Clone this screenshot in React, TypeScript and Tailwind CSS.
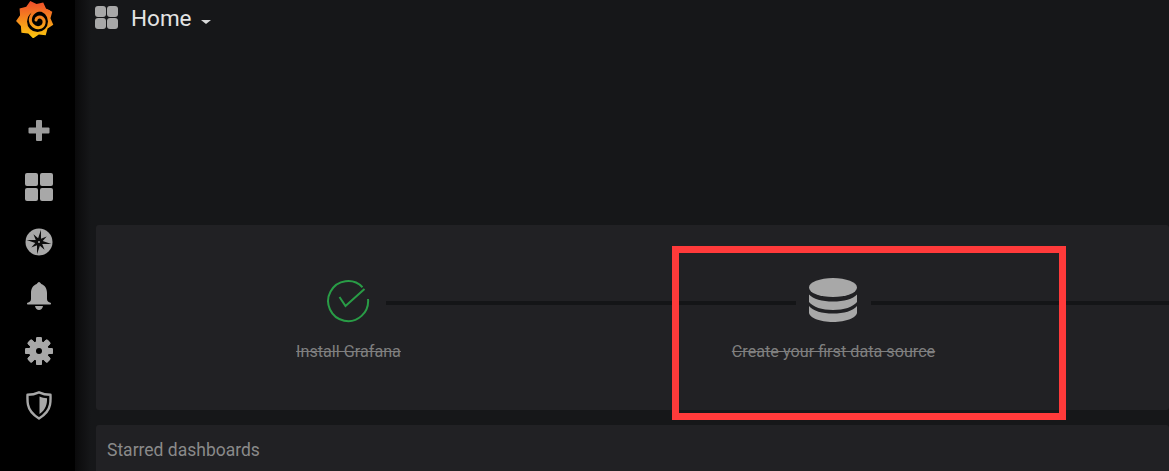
import React from "react";

const Grid = ({ size, gap, r }: { size: number; gap: number; r: number }) => {
  const c = (size - gap) / 2;
  return (
    <svg width={size} height={size} viewBox={`0 0 ${size} ${size}`} fill="#a8a8a8">
      <rect x={0} y={0} width={c} height={c} rx={r} />
      <rect x={c + gap} y={0} width={c} height={c} rx={r} />
      <rect x={0} y={c + gap} width={c} height={c} rx={r} />
      <rect x={c + gap} y={c + gap} width={c} height={c} rx={r} />
    </svg>
  );
};

const starPoints = (cx: number, cy: number, rays: number, radius: (k: number) => number, start: number) => {
  const pts: string[] = [];
  for (let k = 0; k < rays * 2; k++) {
    const a = start + (k * Math.PI) / rays;
    const r = radius(k);
    pts.push(`${(cx + r * Math.sin(a)).toFixed(2)},${(cy - r * Math.cos(a)).toFixed(2)}`);
  }
  return pts.join(" ");
};

const Logo = () => (
  <svg width="38" height="38" viewBox="0 0 38 38">
    <defs>
      <linearGradient id="lg" gradientUnits="userSpaceOnUse" x1="0" y1="2" x2="0" y2="38">
        <stop offset="0" stopColor="#ef4f2b" />
        <stop offset="1" stopColor="#fcc80e" />
      </linearGradient>
    </defs>
    <polygon
      fill="url(#lg)"
      points={starPoints(19, 19.500, 9, (k) => (k % 2 === 0 ? 19 : 15.500), -0.25)}
    />
    <circle cx="21.500" cy="21.500" r="10.500" fill="#000" />
    <path
      fill="none"
      stroke="url(#lg)"
      strokeWidth="3"
      strokeLinecap="round"
      d="M33 11.500C27 8 18 9.500 15 16.500c-2.500 6.500 3 12 8.500 11 5-1 6-7 2.800-9.500-2.500-2-6-.7-6.300 2"
    />
  </svg>
);

const Compass = () => (
  <svg width="28" height="28" viewBox="0 0 28 28">
    <circle cx="14" cy="14" r="13.500" fill="#a8a8a8" />
    <polygon
      fill="#0b0b0b"
      points={starPoints(14, 14, 8, (k) => (k % 2 === 1 ? 3.800 : k % 4 === 0 ? 12.500 : 9.500), 0.16)}
    />
    <circle cx="14" cy="14" r="1" fill="#a8a8a8" />
  </svg>
);

const Bell = () => (
  <svg width="24" height="29" viewBox="0 0 24 29" fill="#a8a8a8">
    <path d="M12 0c1 0 1.500 1 2.300 2C17.500 3 20 6 20 11v6c0 2 1.500 3.500 3.500 3.800.7.100.7 1.700-.2 1.700H.700c-.9 0-.9-1.600-.2-1.700C2.500 20.500 4 19 4 17v-6c0-5 2.500-8 5.700-9C10.500 1 11 0 12 0z" />
    <path d="M8 24h8c-.5 2.500-2 4-4 4s-3.500-1.500-4-4z" />
  </svg>
);

const Gear = () => (
  <svg width="28" height="28" viewBox="0 0 28 28">
    <g fill="#a8a8a8">
      {[0, 45, 90, 135, 180, 225, 270, 315].map((a) => (
        <rect key={a} x="11" y="0" width="6" height="28" rx="1.500" transform={`rotate(${a} 14 14)`} />
      ))}
      <circle cx="14" cy="14" r="10" />
    </g>
    <circle cx="14" cy="14" r="3" fill="#000" />
  </svg>
);

const Shield = () => (
  <svg width="26" height="29" viewBox="0 0 26 29">
    <path
      fill="none"
      stroke="#a8a8a8"
      strokeWidth="2.400"
      strokeLinejoin="round"
      d="M13 1.300c3.500 1.600 7 2.400 11.500 2.400 0 3 .3 6.500-.5 10-1 5.500-5 10-11 13.800C7 23.700 3 19.200 2 13.700c-.8-3.500-.5-7-.5-10C6 3.700 9.500 2.900 13 1.300z"
    />
    <path fill="#a8a8a8" d="M13.500 5.500c2.500 1 4.800 1.700 7.500 1.800.2 5.700-1 11.200-7.500 15.700z" />
  </svg>
);

const Database = () => (
  <svg width="48" height="44" viewBox="0 0 48 44" fill="#a8a8a8" className="mb-[2px] mr-[2px]">
    <ellipse cx="24" cy="9.500" rx="24" ry="9.500" />
    <path d="M0 16.500C4 21 13 23.500 24 23.500S44 21 48 16.500V24C44 29 35 32 24 32S4 29 0 24z" />
    <path d="M0 28C4 33 13 35.500 24 35.500S44 33 48 28V34.500C48 39.500 37 44 24 44S0 39.500 0 34.500z" />
  </svg>
);

const Check = () => (
  <svg width="44" height="44" viewBox="0 0 44 44" fill="none" stroke="#299c46" className="mr-[1px]">
    <path d="M42 20A20 20 0 1 1 36.500 8.200" strokeWidth="2" />
    <path d="M13.500 18L19.500 27L38.500 10" strokeWidth="2" />
  </svg>
);

const Line = () => <div className="h-1 flex-1 bg-[#141517] mt-[4px]" />;

const Step = ({
  icon,
  label,
  leftLine,
}: {
  icon: React.ReactNode;
  label?: string;
  leftLine: boolean;
}) => (
  <div className="w-[485px] shrink-0 flex flex-col items-center">
    <div className="w-full h-[50px] flex items-center">
      {leftLine ? <Line /> : <div className="flex-1" />}
      <div className="w-[75px] h-[50px] flex items-center justify-center shrink-0">{icon}</div>
      <Line />
    </div>
    {label && (
      <div className="mt-[16px] text-[16.200px] leading-[20px] text-[#7f7f7f] line-through">{label}</div>
    )}
  </div>
);

export default function App() {
  return (
    <div
      className="relative w-[1169px] h-[471px] flex overflow-hidden bg-[#161719]"
      style={{ fontFamily: '"Roboto", "Liberation Sans", sans-serif' }}
    >
      <aside className="w-[75px] shrink-0 bg-black flex flex-col items-center">
        <div className="h-[38px] w-full pr-[5px] flex items-start justify-center overflow-hidden">
          <Logo />
        </div>
        <div className="ml-[3px] flex flex-col items-center mt-[82px]">
          <svg width="22" height="22" viewBox="0 0 22 22" fill="#9c9c9c">
            <rect x="8" y="0" width="6" height="21" rx="1" />
            <rect x="0.500" y="7.500" width="21" height="6" rx="1" />
          </svg>
          <div className="mt-[31px] h-[28px]"><Grid size={28} gap={2} r={2} /></div>
          <div className="mt-[27px] h-[28px]"><Compass /></div>
          <div className="mt-[26px] h-[29px]"><Bell /></div>
          <div className="mt-[26px] h-[28px]"><Gear /></div>
          <div className="mt-[26px] h-[29px]"><Shield /></div>
        </div>
      </aside>

      <main className="relative flex-1 min-w-0">
        <div className="absolute inset-y-0 left-0 w-[16px] bg-gradient-to-r from-[#0a0a0b] to-transparent" />
        <header className="relative h-[225px] pl-[20px] flex items-start">
          <div className="mt-[6px] h-[23px]"><Grid size={23} gap={1} r={3} /></div>
          <span className="ml-[13px] mt-[3px] text-[22.500px] leading-[30px] text-[#e3e3e3]">Home</span>
          <span className="ml-[9px] mt-[20px] w-0 h-0 border-x-[5px] border-x-transparent border-t-[4px] border-t-[#d8d9da]" />
        </header>

        <section className="relative ml-[21px] h-[185px] rounded-[3px] bg-[#212124] pl-[10px] pt-[51px] flex overflow-hidden">
          <Step icon={<Check />} label="Install Grafana" leftLine={false} />
          <Step icon={<Database />} label="Create your first data source" leftLine />
          <Step icon={null} leftLine />
        </section>

        <section className="relative ml-[21px] mt-[15px] h-[60px] rounded-[3px] bg-[#212124] pl-[11px] pt-[12px]">
          <h2 className="text-[17.500px] leading-[26px] font-normal text-[#8a8a8a]">Starred dashboards</h2>
        </section>
      </main>

      <div className="absolute left-[672px] top-[246px] w-[394px] h-[174px] border-[7px] border-[#ff3a3a]" />
    </div>
  );
}
